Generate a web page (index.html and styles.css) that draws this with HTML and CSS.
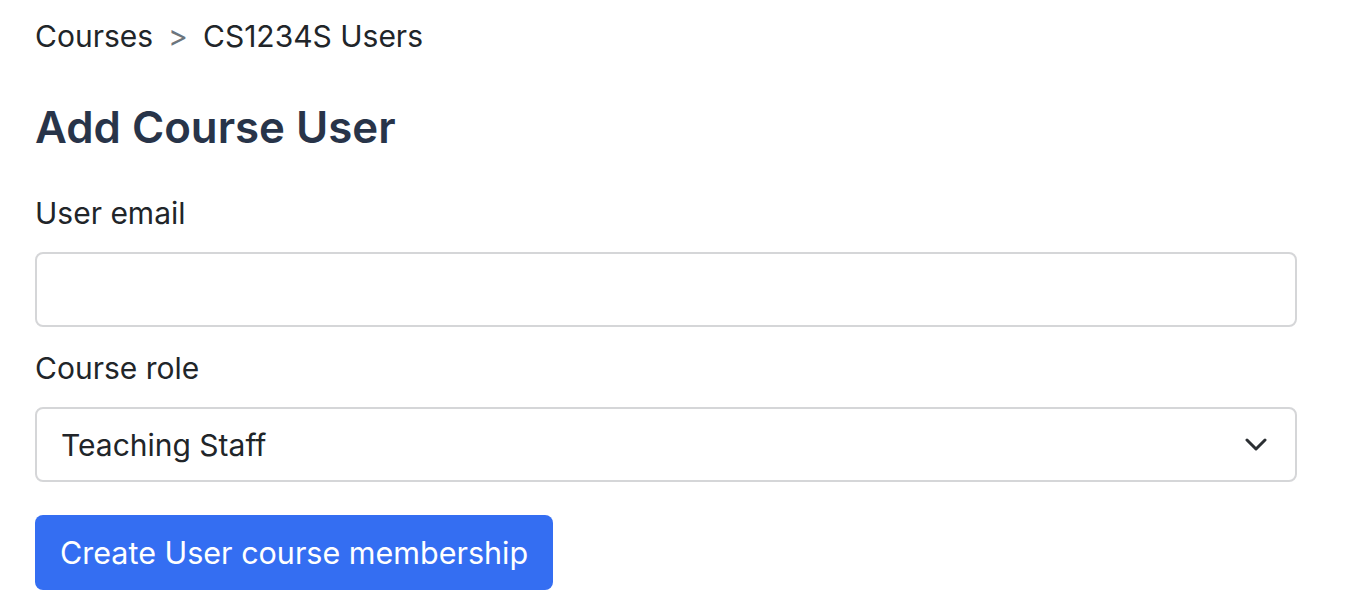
FILE: index.html
```html
<!DOCTYPE html>
<html>
<head>
<meta charset="utf-8">
<link rel="stylesheet" href="styles.css">
</head>
<body>
<main class="page">
  <nav class="crumbs">
    <a class="crumb">Courses</a>
    <span class="sep">&gt;</span>
    <a class="crumb">CS1234S Users</a>
  </nav>
  <h1 class="title">Add Course User</h1>
  <form class="form">
    <label class="label" for="email">User email</label>
    <input class="control" id="email" type="text">
    <label class="label" for="role">Course role</label>
    <div class="select">
      <span class="select-text">Teaching Staff</span>
      <svg class="chev" width="22" height="14" viewBox="0 0 22 14"><path d="M2 2 L11 11 L20 2" fill="none" stroke="#2b2f33" stroke-width="3" stroke-linecap="round" stroke-linejoin="round"/></svg>
    </div>
    <button class="btn" type="button">Create User course membership</button>
  </form>
</main>
</body>
</html>
```
FILE: styles.css
```css
* { box-sizing: border-box; }
html, body { margin: 0; padding: 0; background: #fff; }
body {
  font-family: "Inter", "Noto Sans", sans-serif;
  color: #212529;
  font-size: 30px;
}
.page {
  padding: 14px 51px 0 35px;
  display: flex;
  flex-direction: column;
}
.crumbs {
  display: flex;
  align-items: center;
  gap: 15px;
  height: 44px;
  line-height: 44px;
}
.crumb { color: #212529; }
.sep { color: #6c757d; font-size: 30px; }
.title {
  margin: 40px 0 0 0;
  font-size: 43.8px;
  font-weight: 600;
  color: #283449;
  line-height: 60px;
}
.form {
  display: flex;
  flex-direction: column;
  margin-top: 35px;
}
.label {
  line-height: 40px;
  margin-bottom: 19px;
}
.control {
  height: 75px;
  border: 2px solid #d5d6d8;
  border-radius: 8px;
  width: 100%;
  font: inherit;
  padding: 0 24px;
  margin-bottom: 21px;
}
.select {
  height: 75px;
  border: 2px solid #d5d6d8;
  border-radius: 8px;
  display: flex;
  align-items: center;
  justify-content: space-between;
  padding: 0 28px 0 24px;
  margin-bottom: 33px;
}
.select-text { color: #212529; }
.chev { display: block; }
.btn {
  align-self: flex-start;
  height: 75px;
  padding: 0 25px;
  background: #346ef2;
  color: #fff;
  border: none;
  border-radius: 8px;
  font: inherit;
  font-size: 30.5px;
}
```
